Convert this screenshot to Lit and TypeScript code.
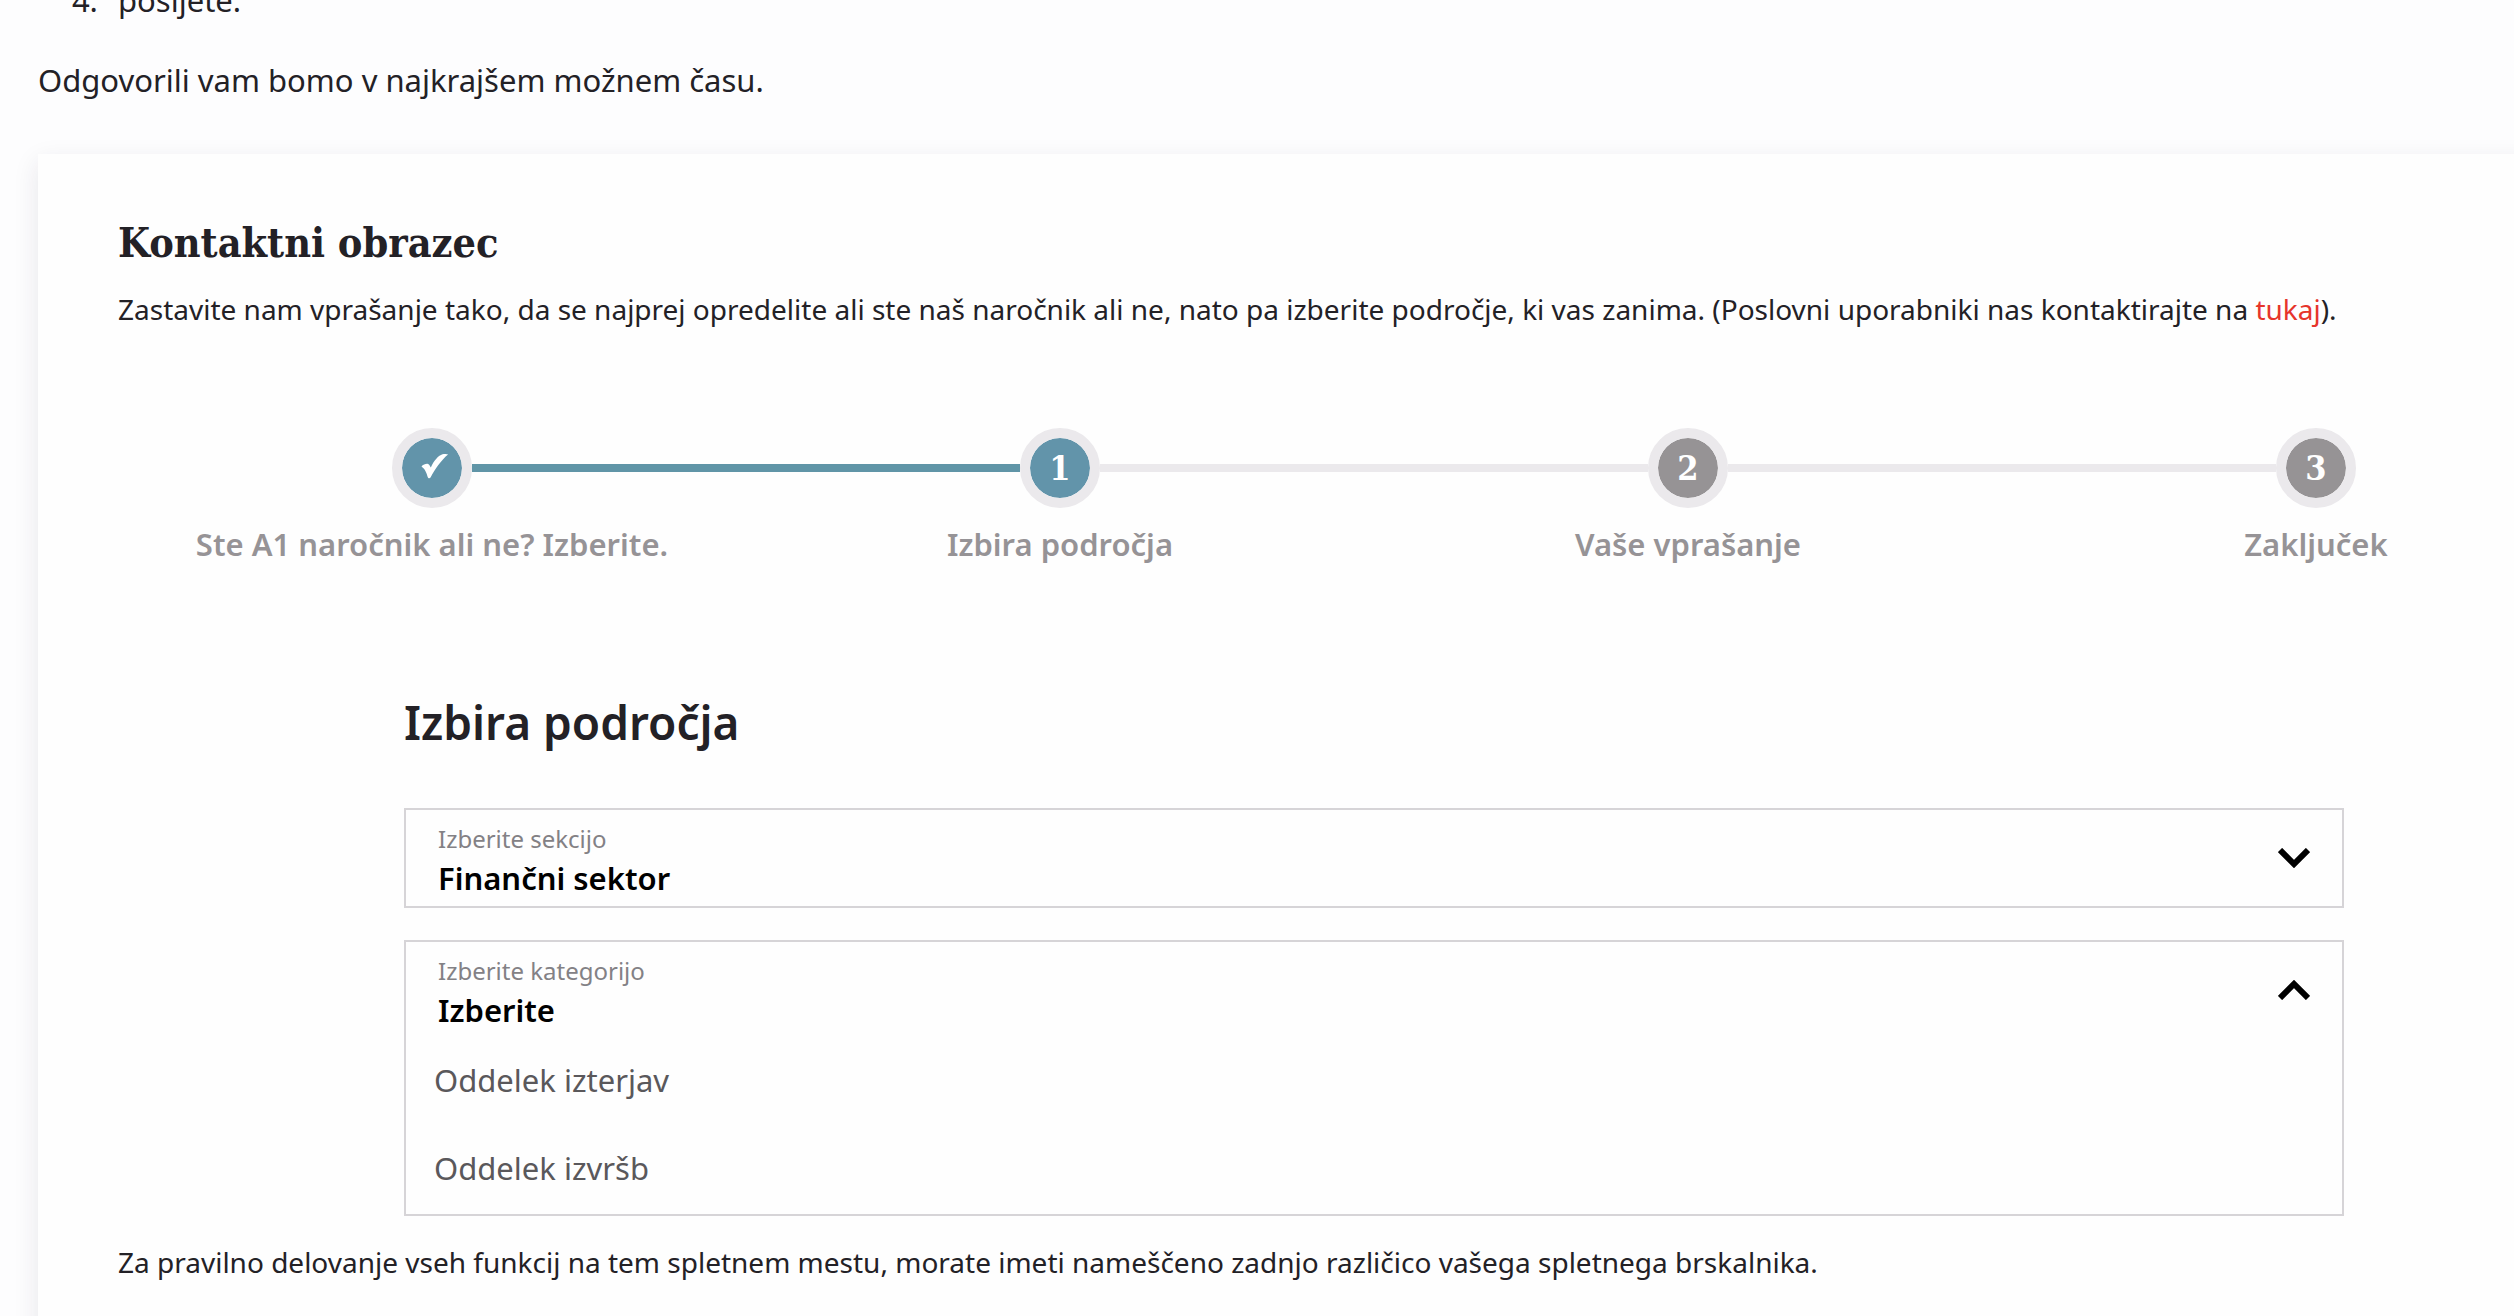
import { LitElement, html, css, svg, nothing } from "lit";
import { customElement, property, state } from "lit/decorators.js";
import { classMap } from "lit/directives/class-map.js";

type StepState = "done" | "current" | "upcoming";

interface Step {
  label: string;
  state: StepState;
}

/** Horizontal progress indicator of the contact form. */
@customElement("form-stepper")
export class FormStepper extends LitElement {
  @property({ attribute: false }) steps: Step[] = [];

  static styles = css`
    :host {
      display: block;
    }
    .steps {
      display: grid;
      grid-auto-flow: column;
      grid-auto-columns: 1fr;
      margin: 0;
      padding: 0;
      list-style: none;
    }
    .step {
      display: flex;
      flex-direction: column;
      gap: 16px;
    }
    .track {
      display: flex;
      align-items: center;
    }
    .line {
      flex: 1;
      height: 8px;
      background: #ebe9ec;
    }
    .line.reached {
      background: #6095a7;
    }
    .line.hidden {
      visibility: hidden;
    }
    .marker {
      display: flex;
      align-items: center;
      justify-content: center;
      box-sizing: border-box;
      width: 80px;
      height: 80px;
      border: 10px solid #ebe9ec;
      border-radius: 50%;
      background: #969395;
      background-clip: padding-box;
      color: #ffffff;
      font: 700 34px/40px "DejaVu Serif Condensed", "DejaVu Serif", serif;
    }
    .marker.active {
      background-color: #6294aa;
    }
    .check {
      width: 60px;
      height: 60px;
    }
    .label {
      color: #969396;
      font-size: 31px;
      font-weight: 600;
      line-height: 40px;
      text-align: center;
    }
  `;

  private marker(step: Step, index: number) {
    if (step.state !== "done") return index;
    return html`<svg class="check" viewBox="0 0 60 60" aria-hidden="true">
      ${svg`<path fill="#ffffff" d="M19.500 28.500 C21 26.500 24.500 25.500 26 26 C27.500 26.500 28 28 28.800 29.500 C32 22.500 36.500 17.500 40.500 16.300 C42.500 15.800 45 16 46 16.500 C39 22.500 33 31 28.800 39 C28 40.800 26.300 40.800 25.700 39 C24.500 35 23.500 31.500 19.500 28.500 Z"></path>`}
    </svg>`;
  }

  render() {
    const last = this.steps.length - 1;
    return html`<ol class="steps">
      ${this.steps.map(
        (step, i) => html`<li
          class="step"
          aria-current=${step.state === "current" ? "step" : nothing}
        >
          <div class="track">
            <span
              class=${classMap({
                line: true,
                hidden: i === 0,
                reached: step.state !== "upcoming",
              })}
            ></span>
            <span
              class=${classMap({
                marker: true,
                active: step.state !== "upcoming",
              })}
              >${this.marker(step, i)}</span
            >
            <span
              class=${classMap({
                line: true,
                hidden: i === last,
                reached: step.state === "done",
              })}
            ></span>
          </div>
          <span class="label">${step.label}</span>
        </li>`
      )}
    </ol>`;
  }
}

/** Bordered drop-down whose choices unfold inside its own frame. */
@customElement("drop-field")
export class DropField extends LitElement {
  @property() label = "";
  @property() value = "";
  @property({ attribute: false }) choices: string[] = [];
  @property({ type: Boolean }) open = false;

  static styles = css`
    :host {
      display: block;
      border: 2px solid #d6d4d7;
      background: #fefefe;
    }
    .head {
      display: flex;
      align-items: flex-start;
      gap: 16px;
      padding: 13px 32px 8px;
    }
    .texts {
      display: flex;
      flex: 1;
      flex-direction: column;
      gap: 3px;
    }
    .label {
      color: #838185;
      font-size: 24px;
      line-height: 32px;
    }
    .select {
      appearance: none;
      width: 100%;
      height: 40px;
      margin: 0;
      padding: 0;
      border: 0;
      outline: 0;
      background: transparent;
      color: #000000;
      font-family: inherit;
      font-size: 31px;
      font-weight: 600;
      line-height: 40px;
      cursor: pointer;
    }
    .chevron {
      width: 32px;
      height: 20px;
      margin-top: 25px;
      fill: none;
      stroke: #000000;
      stroke-width: 6px;
    }
    .choices {
      margin: 0;
      padding: 0;
      list-style: none;
    }
    .choice {
      display: block;
      width: 100%;
      margin: 0;
      padding: 22px 28px 26px;
      border: 0;
      background: transparent;
      color: #5a585b;
      font-family: inherit;
      font-size: 31px;
      line-height: 40px;
      text-align: left;
      cursor: pointer;
    }
  `;

  private toggle(event: Event) {
    event.preventDefault();
    this.open = !this.open;
  }

  private pick(choice: string) {
    this.value = choice;
    this.open = false;
  }

  render() {
    const points = this.open ? "2,18 16,4 30,18" : "2,2 16,16 30,2";
    return html`
      <div class="head">
        <div class="texts">
          <label class="label" for="field">${this.label}</label>
          <select class="select" id="field" @mousedown=${this.toggle}>
            <option>${this.value}</option>
          </select>
        </div>
        <svg class="chevron" viewBox="0 0 32 20" aria-hidden="true">
          <polyline points=${points}></polyline>
        </svg>
      </div>
      ${this.open
        ? html`<ul class="choices">
            ${this.choices.map(
              (choice) => html`<li>
                <button
                  class="choice"
                  type="button"
                  @click=${() => this.pick(choice)}
                >
                  ${choice}
                </button>
              </li>`
            )}
          </ul>`
        : nothing}
    `;
  }
}

@customElement("app-root")
export class AppRoot extends LitElement {
  @state() private steps: Step[] = [
    { label: "Ste A1 naročnik ali ne? Izberite.", state: "done" },
    { label: "Izbira področja", state: "current" },
    { label: "Vaše vprašanje", state: "upcoming" },
    { label: "Zaključek", state: "upcoming" },
  ];

  static styles = css`
    :host {
      display: block;
      height: 100vh;
      overflow: hidden;
      background: #fdfdfe;
      color: #232126;
      font-family: "Noto Sans", "Open Sans", sans-serif;
    }
    /* The page is scrolled: the list's last line is cut by the top edge
       and the card runs on past the right edge. */
    .page {
      margin: -24px -196px 0 0;
      padding-left: 38px;
    }
    .list {
      margin: 0;
      padding-left: 68px;
      font-size: 31px;
      line-height: 48px;
    }
    .item {
      padding-left: 12px;
    }
    .note {
      margin: 32px 0 50px;
      font-size: 31px;
      line-height: 48px;
    }
    .card {
      padding: 61px 80px 80px;
      background: #fefefe;
      box-shadow: 0 8px 24px rgba(40, 30, 60, 0.1);
    }
    .title {
      margin: 0 0 16px;
      font: 700 41px/56px "DejaVu Serif Condensed", "DejaVu Serif", serif;
    }
    .text {
      margin: 0;
      font-size: 28px;
      line-height: 44px;
    }
    .link {
      color: #e6352b;
      text-decoration: none;
    }
    .stepper {
      margin: 97px 0 128px;
    }
    .form {
      display: flex;
      flex-direction: column;
      gap: 32px;
      margin: 0 286px 24px;
    }
    .subtitle {
      margin: 0 0 24px;
      font-size: 46px;
      font-weight: 600;
      line-height: 60px;
    }
  `;

  render() {
    return html`
      <main class="page">
        <ol class="list" start="4">
          <li class="item">pošljete.</li>
        </ol>
        <p class="note">Odgovorili vam bomo v najkrajšem možnem času.</p>
        <section class="card">
          <h2 class="title">Kontaktni obrazec</h2>
          <p class="text">
            Zastavite nam vprašanje tako, da se najprej opredelite ali ste naš
            naročnik ali ne, nato pa izberite področje, ki vas zanima. (Poslovni
            uporabniki nas kontaktirajte na
            <a class="link" href="#tukaj">tukaj</a>).
          </p>
          <form-stepper class="stepper" .steps=${this.steps}></form-stepper>
          <form class="form">
            <h3 class="subtitle">Izbira področja</h3>
            <drop-field
              label="Izberite sekcijo"
              value="Finančni sektor"
              .choices=${["Finančni sektor"]}
            ></drop-field>
            <drop-field
              label="Izberite kategorijo"
              value="Izberite"
              open
              .choices=${["Oddelek izterjav", "Oddelek izvršb"]}
            ></drop-field>
          </form>
          <p class="text">
            Za pravilno delovanje vseh funkcij na tem spletnem mestu, morate
            imeti nameščeno zadnjo različico vašega spletnega brskalnika.
          </p>
        </section>
      </main>
    `;
  }
}
